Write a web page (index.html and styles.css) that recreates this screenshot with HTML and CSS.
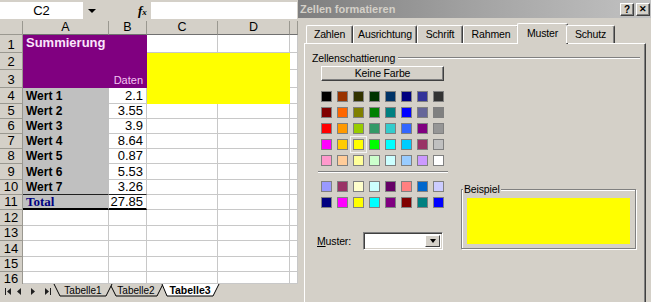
FILE: index.html
```html
<!DOCTYPE html>
<html lang="de">
<head>
    <meta charset="UTF-8">
    <title>Zellen formatieren</title>
    <link rel="stylesheet" href="styles.css">
</head>
<body>
<div class="screen">
    <!-- Excel sheet -->
    <div class="excel">
        <div class="formula-bar">
            <div class="namebox">C2</div>
            <span class="name-arrow"></span>
            <span class="fx"><i>f</i><small>x</small></span>
            <div class="formula-input"></div>
        </div>

        <div class="sheet">
            <div class="corner"></div><div class="ch">A</div><div class="ch">B</div><div class="ch">C</div><div class="ch">D</div><div class="ch"></div>

            <div class="rh">1</div><div class="c purple heading">Summierung</div><div class="c purple"></div><div class="c"></div><div class="c"></div><div class="c"></div>
            <div class="rh">2</div><div class="c purple"></div><div class="c purple"></div><div class="c yellow"></div><div class="c yellow"></div><div class="c"></div>
            <div class="rh">3</div><div class="c purple"></div><div class="c purple num daten">Daten</div><div class="c yellow"></div><div class="c yellow"></div><div class="c"></div>
            <div class="rh">4</div><div class="c gray label">Wert 1</div><div class="c num">2.1</div><div class="c yellow"></div><div class="c yellow"></div><div class="c"></div>
            <div class="rh">5</div><div class="c gray label">Wert 2</div><div class="c num">3.55</div><div class="c"></div><div class="c"></div><div class="c"></div>
            <div class="rh">6</div><div class="c gray label">Wert 3</div><div class="c num">3.9</div><div class="c"></div><div class="c"></div><div class="c"></div>
            <div class="rh">7</div><div class="c gray label">Wert 4</div><div class="c num">8.64</div><div class="c"></div><div class="c"></div><div class="c"></div>
            <div class="rh">8</div><div class="c gray label">Wert 5</div><div class="c num">0.87</div><div class="c"></div><div class="c"></div><div class="c"></div>
            <div class="rh">9</div><div class="c gray label">Wert 6</div><div class="c num">5.53</div><div class="c"></div><div class="c"></div><div class="c"></div>
            <div class="rh">10</div><div class="c gray label above-total">Wert 7</div><div class="c num above-total">3.26</div><div class="c"></div><div class="c"></div><div class="c"></div>
            <div class="rh">11</div><div class="c gray total-label total">Total</div><div class="c num total">27.85</div><div class="c"></div><div class="c"></div><div class="c"></div>
            <div class="rh">12</div><div class="c"></div><div class="c"></div><div class="c"></div><div class="c"></div><div class="c"></div>
            <div class="rh">13</div><div class="c"></div><div class="c"></div><div class="c"></div><div class="c"></div><div class="c"></div>
            <div class="rh">14</div><div class="c"></div><div class="c"></div><div class="c"></div><div class="c"></div><div class="c"></div>
            <div class="rh">15</div><div class="c"></div><div class="c"></div><div class="c"></div><div class="c"></div><div class="c"></div>
            <div class="rh cut">16</div><div class="c"></div><div class="c"></div><div class="c"></div><div class="c"></div><div class="c"></div>
        </div>

        <svg class="sheet-tabs" width="298" height="14" viewBox="0 0 298 14">
            <g fill="#202020">
                <rect x="5" y="4" width="1" height="7"/>
                <path d="M11 4 L7 7.5 L11 11 Z"/>
                <path d="M21 4 L17 7.5 L21 11 Z"/>
                <path d="M31 4 L35 7.5 L31 11 Z"/>
                <path d="M45 4 L49 7.5 L45 11 Z"/>
                <rect x="50" y="4" width="1" height="7"/>
            </g>
            <path d="M110 0 L116 12 L157 12 L163 0" fill="#d4d0c8" stroke="#000" stroke-width="1"/>
            <path d="M54 0 L60 12 L106 12 L112 0" fill="#d4d0c8" stroke="#000" stroke-width="1"/>
            <path d="M162 0 L167 12 L213 12 L219 0" fill="#fff" stroke="#000" stroke-width="1"/>
            <text x="83" y="10" class="tab-text">Tabelle1</text>
            <text x="136" y="10" class="tab-text">Tabelle2</text>
            <text x="190" y="10" class="tab-text active">Tabelle3</text>
        </svg>
    </div>

    <!-- Format cells dialog -->
    <div class="dialog">
        <div class="titlebar">
            <span class="title">Zellen formatieren</span>
            <div class="title-buttons">
                <span class="tbtn">?</span>
                <span class="tbtn close">&#10005;</span>
            </div>
        </div>

        <div class="tabs">
            <div class="tab w-zahlen">Zahlen</div>
            <div class="tab w-ausrichtung">Ausrichtung</div>
            <div class="tab w-schrift">Schrift</div>
            <div class="tab w-rahmen">Rahmen</div>
            <div class="tab active w-muster">Muster</div>
            <div class="tab w-schutz">Schutz</div>
        </div>

        <div class="panel">
            <div class="group-head">
                <span>Zellenschattierung</span>
                <span class="etched"></span>
            </div>
            <div class="panel-body">
                <div class="left-col">
                    <div class="btn">Keine Farbe</div>
                    <div class="palette">
                        <i style="background:#000000"></i><i style="background:#993300"></i><i style="background:#333300"></i><i style="background:#003300"></i><i style="background:#003366"></i><i style="background:#000080"></i><i style="background:#333399"></i><i style="background:#333333"></i>
                        <i style="background:#800000"></i><i style="background:#ff6600"></i><i style="background:#808000"></i><i style="background:#008000"></i><i style="background:#008080"></i><i style="background:#0000ff"></i><i style="background:#666699"></i><i style="background:#808080"></i>
                        <i style="background:#ff0000"></i><i style="background:#ff9900"></i><i style="background:#99cc00"></i><i style="background:#339966"></i><i style="background:#33cccc"></i><i style="background:#3366ff"></i><i style="background:#800080"></i><i style="background:#969696"></i>
                        <i style="background:#ff00ff"></i><i style="background:#ffcc00"></i><i class="selected" style="background:#ffff00"></i><i style="background:#00ff00"></i><i style="background:#00ffff"></i><i style="background:#00ccff"></i><i style="background:#993366"></i><i style="background:#c0c0c0"></i>
                        <i style="background:#ff99cc"></i><i style="background:#ffcc99"></i><i style="background:#ffff99"></i><i style="background:#ccffcc"></i><i style="background:#ccffff"></i><i style="background:#99ccff"></i><i style="background:#cc99ff"></i><i style="background:#ffffff"></i>
                    </div>
                    <div class="separator"></div>
                    <div class="palette">
                        <i style="background:#9999ff"></i><i style="background:#993366"></i><i style="background:#ffffcc"></i><i style="background:#ccffff"></i><i style="background:#660066"></i><i style="background:#ff8080"></i><i style="background:#0066cc"></i><i style="background:#ccccff"></i>
                        <i style="background:#000080"></i><i style="background:#ff00ff"></i><i style="background:#ffff00"></i><i style="background:#00ffff"></i><i style="background:#800080"></i><i style="background:#800000"></i><i style="background:#008080"></i><i style="background:#0000ff"></i>
                    </div>
                    <div class="muster-row">
                        <label class="muster-label"><u>M</u>uster:</label>
                        <div class="combo">
                            <span class="combo-btn"></span>
                        </div>
                    </div>
                </div>
                <div class="right-col">
                    <div class="groupbox">
                        <span class="legend">Beispiel</span>
                        <div class="sample"></div>
                    </div>
                </div>
            </div>
        </div>
    </div>
</div>
</body>
</html>
```

FILE: styles.css
```css
* { box-sizing: border-box; }
body {
    margin: 0;
    width: 651px;
    height: 302px;
    overflow: hidden;
    background: #d4d0c8;
    font-family: "Liberation Sans", Arial, sans-serif;
}
.screen { display: flex; height: 302px; }

/* ---------- Excel ---------- */
.excel {
    width: 298px;
    display: flex;
    flex-direction: column;
    background: #d4d0c8;
}
.formula-bar {
    height: 21px;
    display: flex;
    align-items: flex-start;
    padding-top: 2px;
}
.namebox {
    width: 83px;
    height: 17px;
    background: #fff;
    font-size: 13px;
    line-height: 17px;
    text-align: center;
}
.name-arrow {
    width: 0;
    height: 0;
    margin: 7px 0 0 5px;
    border-left: 4px solid transparent;
    border-right: 4px solid transparent;
    border-top: 4px solid #000;
}
.fx {
    margin-left: 42px;
    width: 13px;
    font-family: "Liberation Serif", serif;
    font-weight: bold;
    font-size: 13px;
    line-height: 17px;
}
.fx small { font-size: 9px; font-style: italic; }
.formula-input {
    flex: 1;
    height: 17px;
    margin-right: 1px;
    background: #fff;
}

.sheet {
    display: grid;
    grid-template-columns: 23px 86px 38px 71px 72px 8px;
    grid-template-rows: 14px 18px 17px 18px 16px 15px 15px 15px 15px 16px 15px 15px 16px 15px 16px 15px 12px;
    background: #fff;
}
.corner, .ch, .rh {
    background: #d4d0c8;
    border-right: 1px solid #9a9890;
    border-bottom: 1px solid #9a9890;
    font-size: 13px;
    color: #000;
    text-align: center;
    overflow: hidden;
}
.ch { line-height: 13px; font-size: 12.5px; border-bottom-color: #707070; }
.rh { line-height: 14px; display: flex; align-items: flex-end; justify-content: center; }
.rh.cut { align-items: flex-start; line-height: 13px; border-bottom: none; }
.c {
    display: flex;
    align-items: flex-end;
    padding: 0 2px 0 3px;
    border-right: 1px solid #c8c8c8;
    border-bottom: 1px solid #c8c8c8;
    font-size: 13px;
    line-height: 14px;
    white-space: nowrap;
    overflow: hidden;
}
.num { justify-content: flex-end; padding-right: 3px; }
.purple { background: #800080; border-color: #800080; }
.yellow { background: #ffff00; border-color: #ffff00; }
.gray { background: #c0c0c0; border-color: #c0c0c0; }
.heading {
    color: #fbe4fb;
    font-weight: bold;
    overflow: visible;
    line-height: 16px;
    align-items: flex-start;
}
.daten { color: #f3c3f3; font-size: 11px; line-height: 13px; }
.label { font-weight: bold; font-size: 12px; }
.above-total { border-bottom-color: #202020; }
.total { border-bottom: 2px solid #000; line-height: 13px; }
.total-label {
    font-family: "Liberation Serif", serif;
    font-size: 13px;
    color: #000080;
    font-weight: bold;
}

.sheet-tabs { display: block; }
.tab-text {
    font-family: "Liberation Sans", Arial, sans-serif;
    font-size: 10px;
    text-anchor: middle;
    fill: #000;
}
.tab-text.active { font-weight: bold; font-size: 10.5px; }

/* ---------- Dialog ---------- */
.dialog {
    width: 353px;
    font-size: 10.5px;
    letter-spacing: -0.15px;
    color: #000;
}
.titlebar {
    height: 18px;
    display: flex;
    align-items: center;
    justify-content: space-between;
    padding: 0 1px 0 2px;
    background: linear-gradient(to right, #7e7e7e, #a6a6a6 55%, #c2c2c2);
}
.title {
    font-weight: bold;
    font-size: 11px;
    letter-spacing: 0;
    color: #d4d0c8;
}
.title-buttons { display: flex; gap: 2px; }
.tbtn {
    width: 14px;
    height: 13px;
    background: #d4d0c8;
    border: 1px solid;
    border-color: #fff #404040 #404040 #fff;
    box-shadow: inset -1px -1px 0 #808080;
    font-weight: bold;
    font-size: 10px;
    line-height: 11px;
    text-align: center;
}
.tbtn.close { font-size: 9px; }

.tabs {
    display: flex;
    align-items: flex-end;
    height: 21px;
    margin: 4px 0 0 8px;
    position: relative;
    z-index: 1;
}
.tab {
    height: 18px;
    border-top: 1px solid #fff;
    border-left: 1px solid #fff;
    border-right: 1px solid #404040;
    box-shadow: inset -1px 0 0 #808080;
    border-radius: 2px 2px 0 0;
    text-align: center;
    line-height: 16px;
    background: #d4d0c8;
}
.tab.active {
    height: 21px;
    margin: 0 -2px -1px;
    line-height: 18px;
}
.w-zahlen { width: 47px; }
.w-ausrichtung { width: 64px; }
.w-schrift { width: 46px; }
.w-rahmen { width: 56px; }
.w-muster { width: 51px; }
.w-schutz { width: 49px; }

.panel {
    margin-left: 6px;
    width: 342px;
    height: 262px;
    border: 1px solid;
    border-color: #fff #404040 #404040 #fff;
    box-shadow: inset -1px 0 0 #808080;
    padding: 8px 5px 0 7px;
}
.group-head {
    display: flex;
    align-items: center;
    height: 12px;
    gap: 3px;
}
.etched {
    flex: 1;
    height: 2px;
    border-top: 1px solid #808080;
    border-bottom: 1px solid #fff;
}
.panel-body { display: flex; }
.left-col { width: 130px; margin-left: 6px; }
.btn {
    width: 123px;
    height: 15px;
    margin: 2px 0 0 3px;
    border: 1px solid;
    border-color: #fff #404040 #404040 #fff;
    box-shadow: inset -1px -1px 0 #808080;
    text-align: center;
    line-height: 13px;
}
.palette {
    display: grid;
    grid-template-columns: repeat(8, 16px);
    grid-auto-rows: 16px;
    margin-top: 7px;
}
.palette i {
    width: 11px;
    height: 11px;
    margin: 3px 0 0 3px;
    border: 1px solid #808080;
}
.palette i.selected {
    box-shadow: 0 0 0 2px #d4d0c8, 0 0 0 3px #f4f4f4;
}
.separator {
    height: 2px;
    margin-top: 3px;
    border-top: 1px solid #808080;
    border-bottom: 1px solid #fff;
}
.palette + .separator + .palette { margin-top: 5px; }
.muster-row {
    display: flex;
    align-items: center;
    margin: 22px 0 0 -1px;
}
.muster-label { width: 46px; }
.combo {
    width: 80px;
    height: 18px;
    display: flex;
    justify-content: flex-end;
    align-items: stretch;
    padding: 1px;
    background: #fff;
    border: 1px solid;
    border-color: #808080 #fff #fff #808080;
    box-shadow: inset 1px 1px 0 #404040, inset -1px -1px 0 #d4d0c8;
}
.combo-btn {
    width: 15px;
    margin: 1px 1px 1px 0;
    background: #d4d0c8;
    border: 1px solid;
    border-color: #fff #404040 #404040 #fff;
    display: flex;
    align-items: center;
    justify-content: center;
}
.combo-btn::after {
    content: "";
    border-left: 3.5px solid transparent;
    border-right: 3.5px solid transparent;
    border-top: 4px solid #000;
}
.right-col { margin: 125px 0 0 13px; }
.groupbox {
    position: relative;
    width: 175px;
    height: 60px;
    border: 1px solid #808080;
    box-shadow: inset 1px 1px 0 #fff, 1px 1px 0 #fff;
    padding: 8px 5px 0 5px;
}
.legend {
    position: absolute;
    top: -7px;
    left: 1px;
    padding: 0 1px;
    background: #d4d0c8;
    line-height: 12px;
}
.sample {
    height: 46px;
    background: #ffff00;
}
```
